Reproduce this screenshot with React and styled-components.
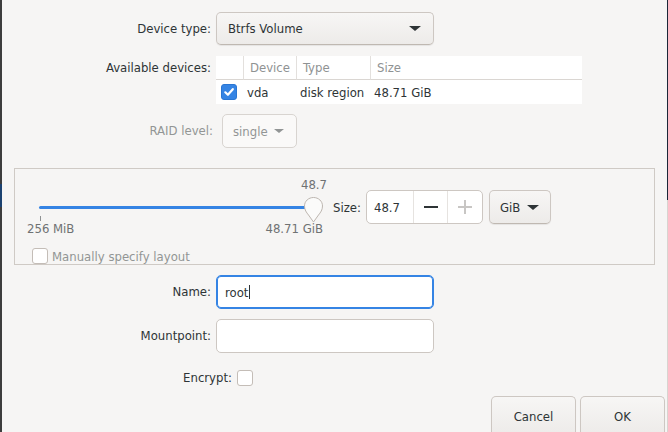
import React from "react";
import styled, { createGlobalStyle } from "styled-components";

const Global = createGlobalStyle`
  html, body { margin: 0; padding: 0; }
  body {
    background: #f6f5f4;
    font-family: "DejaVu Sans Condensed", "DejaVu Sans", sans-serif;
    font-stretch: condensed;
    font-size: 13px;
    color: #2e3436;
  }
`;

const Window = styled.div`
  width: 668px;
  height: 432px;
  display: flex;
  overflow: hidden;
  background: #f6f5f4;
`;

const LeftEdge = styled.div`
  width: 2px;
  flex: none;
  background: linear-gradient(
    to bottom,
    #3d3d3d 0, #3d3d3d 184px,
    #1c4270 184px, #1c4270 207px,
    #3d3d3d 207px
  );
`;

const RightEdge = styled.div`
  width: 1px;
  flex: none;
  margin-left: auto;
  background: linear-gradient(to bottom, #1b2638 0, #1b2638 200px, #d8d4d0 200px);
`;

const Content = styled.div`
  display: flex;
  flex-direction: column;
  padding-top: 12px;
  width: 664px;
`;

const FormRow = styled.div`
  display: grid;
  grid-template-columns: ${(p) => p.$label || 209}px auto;
  column-gap: ${(p) => p.$gap || 5}px;
  align-items: ${(p) => (p.$top ? "start" : "center")};
  margin-top: ${(p) => p.$mt || 0}px;
`;

const Label = styled.div`
  text-align: right;
  white-space: nowrap;
  color: ${(p) => (p.$disabled ? "#929595" : "#2e3436")};
  padding-top: ${(p) => p.$pt || 0}px;
  line-height: 16px;
`;

const Combo = styled.div`
  box-sizing: border-box;
  width: ${(p) => p.$w}px;
  height: ${(p) => p.$h || 33}px;
  display: flex;
  align-items: center;
  justify-content: space-between;
  padding: 0 ${(p) => p.$pr || 11}px 0 ${(p) => p.$pl || 11}px;
  border: 1px solid ${(p) => (p.$disabled ? "#d8d4d0" : "#cdc7c2")};
  border-bottom-color: ${(p) => (p.$disabled ? "#d8d4d0" : "#bfb8b1")};
  border-radius: 5px;
  background: ${(p) =>
    p.$disabled ? "#faf9f8" : "linear-gradient(to bottom, #f7f6f5, #edebe9)"};
  box-shadow: ${(p) => (p.$disabled ? "none" : "0 1px 1px rgba(0,0,0,0.07)")};
  color: ${(p) => (p.$disabled ? "#929595" : "#2e3436")};
`;

const Arrow = styled.span`
  width: 0;
  height: 0;
  border-left: ${(p) => p.$s}px solid transparent;
  border-right: ${(p) => p.$s}px solid transparent;
  border-top: ${(p) => Math.round(p.$s * 0.85)}px solid
    ${(p) => (p.$disabled ? "#929595" : "#2e3436")};
  margin-left: ${(p) => p.$ml || 0}px;
`;

const Table = styled.div`
  width: 366px;
  background: #ffffff;
  display: grid;
  grid-template-columns: 27px 53px 74px 1fr;
`;

const HeadCell = styled.div`
  height: 24px;
  box-sizing: border-box;
  display: flex;
  align-items: center;
  padding-left: 6px;
  color: #8f9293;
  border-bottom: 1px solid #dad6d2;
  border-left: ${(p) => (p.$first ? "none" : "1px solid #e3e0dd")};
`;

const Cell = styled.div`
  height: 24px;
  display: flex;
  align-items: center;
  padding-left: ${(p) => p.$pl ?? 4}px;
  white-space: nowrap;
`;

const CheckBox = styled.div`
  box-sizing: border-box;
  width: ${(p) => p.$size || 16}px;
  height: ${(p) => p.$size || 16}px;
  border-radius: 3px;
  display: flex;
  align-items: center;
  justify-content: center;
  background: ${(p) => (p.$checked ? "#3584e4" : "#ffffff")};
  border: 1px solid ${(p) => (p.$checked ? "#2a76d3" : "#c4bdb7")};
  flex: none;
`;

const Frame = styled.div`
  margin: 20px 0 0 12px;
  width: 641px;
  height: 100px;
  box-sizing: border-box;
  border: 1px solid #cfcac5;
  padding: 9px 0 0 12px;
  display: flex;
  flex-direction: column;
`;

const SizeRow = styled.div`
  display: flex;
  align-items: flex-start;
`;

const SliderBox = styled.div`
  width: 300px;
  display: flex;
  flex-direction: column;
  flex: none;
`;

const ValueRow = styled.div`
  height: 14px;
  line-height: 14px;
  text-align: right;
  color: #6f7273;
`;

const TrackRow = styled.div`
  position: relative;
  height: 24px;
`;

const Track = styled.div`
  position: absolute;
  left: 12px;
  top: 14px;
  width: 275px;
  height: 3px;
  border-radius: 2px;
  background: #3584e4;
`;

const Thumb = styled.svg`
  position: absolute;
  left: 277px;
  top: 5px;
  overflow: visible;
`;

const TickRow = styled.div`
  height: 6px;
  padding-left: 13px;
`;

const Tick = styled.div`
  width: 1px;
  height: 5px;
  background: #8f9293;
`;

const MarkLabels = styled.div`
  height: 14px;
  line-height: 14px;
  display: flex;
  justify-content: space-between;
  padding-right: 4px;
  color: #6f7273;
`;

const SizeControls = styled.div`
  display: flex;
  align-items: center;
  margin-top: 12px;
  margin-left: 6px;
  gap: 5px;
`;

const Spin = styled.div`
  box-sizing: border-box;
  width: 117px;
  height: 34px;
  display: flex;
  border: 1px solid #cdc7c2;
  border-radius: 5px;
  background: #ffffff;
  overflow: hidden;
  margin-right: 1px;
`;

const SpinEntry = styled.div`
  width: 46px;
  display: flex;
  align-items: center;
  padding-left: 7px;
  box-sizing: border-box;
`;

const SpinButton = styled.div`
  flex: 1;
  display: flex;
  align-items: center;
  justify-content: center;
  border-left: 1px solid #e6e3e0;
`;

const ManualRow = styled.div`
  display: flex;
  align-items: center;
  gap: 4px;
  margin: 12px 0 0 5px;
  color: #929595;
`;

const Entry = styled.div`
  box-sizing: border-box;
  width: 218px;
  height: 34px;
  display: flex;
  align-items: center;
  padding-left: 8px;
  border: 1px solid ${(p) => (p.$focus ? "#3584e4" : "#cdc7c2")};
  box-shadow: ${(p) => (p.$focus ? "inset 0 0 0 1px #3584e4" : "none")};
  border-radius: 5px;
  background: #ffffff;
`;

const Caret = styled.span`
  display: inline-block;
  width: 1px;
  height: 14px;
  background: #2e3436;
  margin-left: 1px;
`;

const Buttons = styled.div`
  display: flex;
  justify-content: flex-end;
  gap: 4px;
  margin-top: 10px;
  padding-right: 1px;
`;

const Button = styled.div`
  box-sizing: border-box;
  width: ${(p) => p.$w}px;
  height: 40px;
  display: flex;
  align-items: center;
  justify-content: center;
  border: 1px solid #cdc7c2;
  border-bottom-color: #bfb8b1;
  border-radius: 5px;
  background: linear-gradient(to bottom, #f7f6f5, #edebe9);
  box-shadow: 0 1px 1px rgba(0,0,0,0.07);
`;

const Check = () => (
  <svg width="12" height="12" viewBox="0 0 12 12">
    <path d="M2.3 6.3 L4.9 8.8 L9.8 3.2" fill="none" stroke="#fff" strokeWidth="2.2" strokeLinecap="round" strokeLinejoin="round" />
  </svg>
);

export default function App() {
  return (
    <>
      <Global />
      <Window>
        <LeftEdge />
        <Content>
          <FormRow>
            <Label>Device type:</Label>
            <Combo $w={218} $pr={12}>
              <span>Btrfs Volume</span>
              <Arrow $s={6} />
            </Combo>
          </FormRow>

          <FormRow $top $mt={11}>
            <Label $pt={4}>Available devices:</Label>
            <Table>
              <HeadCell $first />
              <HeadCell>Device</HeadCell>
              <HeadCell>Type</HeadCell>
              <HeadCell>Size</HeadCell>
              <Cell $pl={5}>
                <CheckBox $checked>
                  <Check />
                </CheckBox>
              </Cell>
              <Cell>vda</Cell>
              <Cell>disk region</Cell>
              <Cell>48.71 GiB</Cell>
            </Table>
          </FormRow>

          <FormRow $mt={10} $gap={9} $label={211}>
            <Label $disabled>RAID level:</Label>
            <Combo $w={75} $h={34} $disabled $pl={10} $pr={12}>
              <span>single</span>
              <Arrow $s={5} $disabled />
            </Combo>
          </FormRow>

          <Frame>
            <SizeRow>
              <SliderBox>
                <ValueRow>48.7</ValueRow>
                <TrackRow>
                  <Track />
                  <Thumb width="19" height="26" viewBox="0 0 19 26">
                    <path
                      d="M9.5 0.5 C14.5 0.5 18.5 4.2 18.5 9 C18.5 13 16.5 15.5 14.5 18 L9.5 25 L4.5 18 C2.5 15.5 0.5 13 0.5 9 C0.5 4.2 4.5 0.5 9.5 0.5 Z"
                      fill="#fbfbfa"
                      stroke="#bdb6b0"
                      strokeWidth="1"
                    />
                  </Thumb>
                </TrackRow>
                <TickRow>
                  <Tick />
                </TickRow>
                <MarkLabels>
                  <span>256 MiB</span>
                  <span>48.71 GiB</span>
                </MarkLabels>
              </SliderBox>
              <SizeControls>
                <span>Size:</span>
                <Spin>
                  <SpinEntry>48.7</SpinEntry>
                  <SpinButton>
                    <svg width="14" height="14" viewBox="0 0 14 14">
                      <rect x="0" y="6" width="14" height="2" fill="#2e3436" />
                    </svg>
                  </SpinButton>
                  <SpinButton>
                    <svg width="14" height="14" viewBox="0 0 14 14">
                      <rect x="0" y="6" width="14" height="2" fill="#c8c6c4" />
                      <rect x="6" y="0" width="2" height="14" fill="#c8c6c4" />
                    </svg>
                  </SpinButton>
                </Spin>
                <Combo $w={62} $h={34} $pl={10} $pr={11}>
                  <span>GiB</span>
                  <Arrow $s={6} />
                </Combo>
              </SizeControls>
            </SizeRow>
            <ManualRow>
              <CheckBox />
              <span>Manually specify layout</span>
            </ManualRow>
          </Frame>

          <FormRow $mt={10}>
            <Label>Name:</Label>
            <Entry $focus>
              root<Caret />
            </Entry>
          </FormRow>

          <FormRow $mt={10}>
            <Label>Mountpoint:</Label>
            <Entry />
          </FormRow>

          <FormRow $mt={17} $label={230}>
            <Label>Encrypt:</Label>
            <CheckBox />
          </FormRow>

          <Buttons>
            <Button $w={85}>Cancel</Button>
            <Button $w={85}>OK</Button>
          </Buttons>
        </Content>
        <RightEdge />
      </Window>
    </>
  );
}
